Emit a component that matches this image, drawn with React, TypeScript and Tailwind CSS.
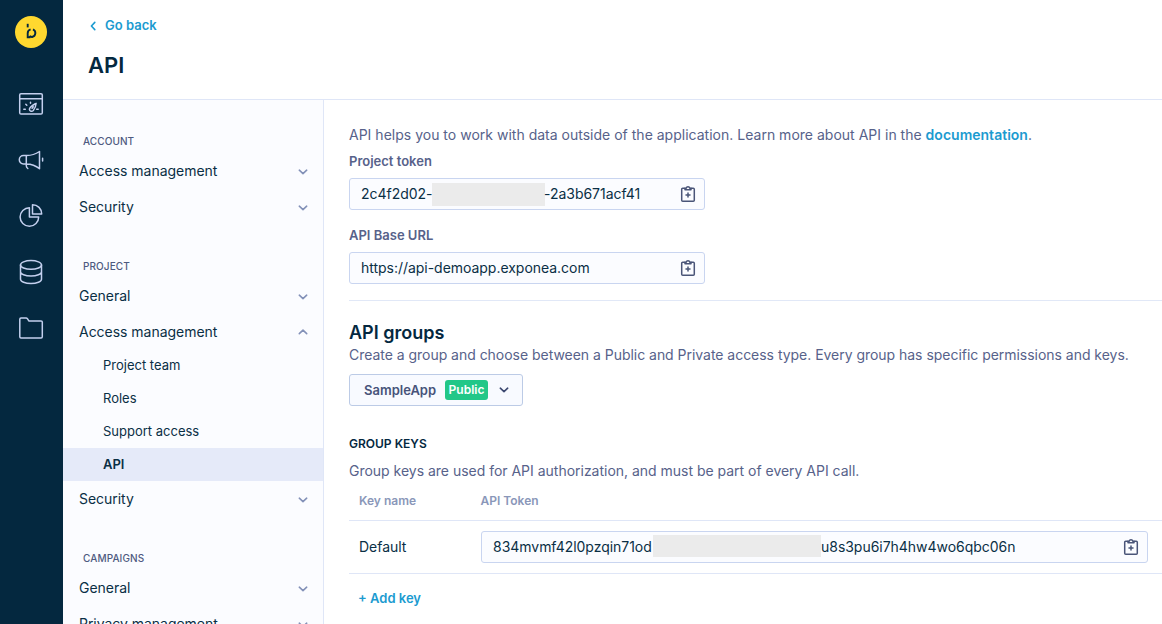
import React from "react";

function Chevron({ up = false, className = "" }: { up?: boolean; className?: string }) {
  return (
    <svg width="10" height="6" viewBox="0 0 10 6" fill="none" stroke="currentColor" strokeWidth="1.6" strokeLinecap="round" strokeLinejoin="round" className={className}>
      <path d={up ? "M1.3 4.6 5 1.2 8.7 4.6" : "M1.3 1.2 5 4.6 8.7 1.2"} />
    </svg>
  );
}

function ClipboardIcon() {
  return (
    <svg width="16" height="18" viewBox="0 0 16 18" fill="none" stroke="#4a5578" strokeWidth="1.5" strokeLinecap="round" strokeLinejoin="round" className="shrink-0">
      <path d="M5 3.2H2.7a1 1 0 0 0-1 1v11.1a1 1 0 0 0 1 1h10.6a1 1 0 0 0 1-1V4.2a1 1 0 0 0-1-1H11" />
      <path d="M5 4.8V3.2H6.1a2 2 0 0 1 3.8 0H11v1.6Z" />
      <path d="M8 8v4M6 10h4" />
    </svg>
  );
}

const iconProps = {
  width: 26,
  height: 26,
  viewBox: "0 0 26 26",
  fill: "none",
  stroke: "#c3cfee",
  strokeWidth: 1.5,
  strokeLinecap: "round" as const,
  strokeLinejoin: "round" as const,
};

function Rail() {
  return (
    <aside className="flex w-[63px] shrink-0 flex-col items-center bg-[#04283f] pt-[15px]">
      <svg width="34" height="34" viewBox="0 0 34 34" fill="none" className="mr-px">
        <circle cx="17" cy="17" r="16" fill="#ffd82f" />
        <g stroke="#04283f" strokeWidth="1.9">
          <path d="M13.7 8.800v3.600" />
          <path d="M16.600 14.300A4.100 4.100 0 0 0 13.700 18.200V22.300H16.400" />
          <path d="M19 14.300A4.100 4.100 0 0 1 18.200 22A4.100 4.100 0 0 1 15.500 21" />
        </g>
      </svg>
      <nav className="mr-px mt-[42px] flex flex-col gap-[30px]">
        <svg {...iconProps}>
          <rect x="1.700" y="2.700" width="22.600" height="20.300" rx="1.300" />
          <path d="M1.700 7.800h22.600M5.800 18.300h1.500M18.700 18.300h1.500M7.800 13.300l1 1M12.500 11.300v1" />
          <path d="M18.100 12.300c-.2 3-1.300 5.500-2.800 7.200-1.300 1.300-3.700.8-3.900-1-.2-2.700 3.600-4.500 6.700-6.200ZM14.100 17.300l1.200-1.500" />
        </svg>
        <svg {...iconProps}>
          <path d="M7.800 8.500H5.500a4 4 0 0 0 0 8.400h2.300M8.300 8.500v8.400M8.300 8.500c5 .1 9.600-1.600 13.200-4v17.200c-3.600-3-8.200-4.700-13.200-4.800M8.300 17v1.700c0 1.200.5 2 1.500 2.800M24.600 11.300v2.800" />
        </svg>
        <svg {...iconProps}>
          <path d="M11.400 4.700A9.300 9.300 0 1 0 20.700 14h-9.300Z" />
          <path d="M14.500 1.700v9.200h9.200a9.200 9.200 0 0 0-9.200-9.200Z" />
        </svg>
        <svg {...iconProps}>
          <ellipse cx="13" cy="5.900" rx="10.500" ry="4.300" />
          <path d="M2.500 5.900v14.300c0 2.400 4.700 4.300 10.500 4.300s10.500-1.900 10.500-4.300V5.900M2.500 12.700c0 2.400 4.700 4.300 10.500 4.300s10.500-1.900 10.500-4.300" />
        </svg>
        <svg {...iconProps}>
          <path d="M1.800 4.200a1.200 1.200 0 0 1 1.200-1.200h5.200c.6 0 .9.300 1.200.7l1.400 2.200h12.300a1.200 1.200 0 0 1 1.200 1.200v14.700a1.200 1.200 0 0 1-1.200 1.200H3a1.200 1.200 0 0 1-1.200-1.200Z" />
        </svg>
      </nav>
    </aside>
  );
}

function SectionTitle({ children }: { children: string }) {
  return <h2 className="mt-[29px] flex h-6 items-center pl-5 text-[10px] font-medium tracking-[0.100px] text-[#4e5a80]">{children}</h2>;
}

function NavRow({ label, open = false }: { label: string; open?: boolean }) {
  return (
    <div className="flex h-9 items-center justify-between pl-4 pr-[15px] text-sm tracking-[-0.030px] text-[#0a2f45]">
      <span>{label}</span>
      <Chevron up={open} className={open ? "mr-[0.5px] text-[#8391b8]" : "mt-[2px] text-[#8391b8]"} />
    </div>
  );
}

function SubRow({ label, active = false }: { label: string; active?: boolean }) {
  return (
    <div className={`flex h-[33px] items-center pl-10 text-[13px] text-[#0a2f45] ${active ? "bg-[#e5eaf9] font-semibold" : ""}`}>
      {label}
    </div>
  );
}

function SettingsNav() {
  return (
    <div className="w-[261px] shrink-0 border-r border-[#dfe6f7] bg-[#fbfcff]">
      <SectionTitle>ACCOUNT</SectionTitle>
      <NavRow label="Access management" />
      <NavRow label="Security" />
      <SectionTitle>PROJECT</SectionTitle>
      <NavRow label="General" />
      <NavRow label="Access management" open />
      <div className="-mt-px">
        <SubRow label="Project team" />
        <SubRow label="Roles" />
        <SubRow label="Support access" />
        <SubRow label="API" active />
      </div>
      <NavRow label="Security" />
      <SectionTitle>CAMPAIGNS</SectionTitle>
      <NavRow label="General" />
      <NavRow label="Privacy management" />
    </div>
  );
}

function TokenField({ children, className = "" }: { children: React.ReactNode; className?: string }) {
  return (
    <div className={`flex h-8 items-center justify-between rounded-[3px] border border-[#c9d5f0] bg-[#fbfcff] pl-[11px] pr-2 text-sm tracking-[-0.030px] text-[#0a2f45] ${className}`}>
      <div className="flex items-center whitespace-nowrap">{children}</div>
      <ClipboardIcon />
    </div>
  );
}

function Content() {
  return (
    <main className="min-w-0 flex-1 bg-white pl-[25px] text-sm text-[#57628a]">
      <p className="mt-[25px] h-5 whitespace-nowrap leading-5 tracking-[0.010px]">
        API helps you to work with data outside of the application. Learn more about API in the{" "}
        <a className="font-semibold text-[#1c9bd0]">documentation</a>.
      </p>
      <label className="mt-[6px] block h-5 text-[13px] font-semibold leading-5">Project token</label>
      <TokenField className="mt-[7px] w-[356px]">
        <span className="w-[71px]">2c4f2d02-</span>
        <span className="h-[23px] w-[113px] bg-[#ebebeb]" />
        <span className="-ml-px">-2a3b671acf41</span>
      </TokenField>
      <label className="mt-[15px] block h-5 text-[13px] font-semibold leading-5">API Base URL</label>
      <TokenField className="mt-[7px] w-[356px]">
        <span>https://api-demoapp.exponea.com</span>
      </TokenField>
      <hr className="mt-4 border-[#e1e8f7]" />
      <h2 className="mt-5 h-6 text-lg font-semibold leading-6 text-[#04283f]">API groups</h2>
      <p className="h-5 whitespace-nowrap leading-5 tracking-[-0.030px]">
        Create a group and choose between a Public and Private access type. Every group has specific permissions and keys.
      </p>
      <button className="mt-[9px] flex h-8 w-[174px] items-center rounded-[3px] border border-[#bccbe6] bg-[#f8faff] pl-[14px] text-[13px] font-semibold text-[#47537a]">
        <span className="w-[81px] text-left">SampleApp</span>
        <span className="flex h-5 w-[43px] items-center justify-center rounded-[3px] bg-[#22c788] text-xs font-semibold text-white">Public</span>
        <Chevron className="ml-[11px] text-[#3c4870]" />
      </button>
      <h3 className="mt-[28px] h-5 text-xs font-semibold leading-5 text-[#04283f]">GROUP KEYS</h3>
      <p className="mt-[7px] h-5 leading-5 tracking-[-0.015px]">Group keys are used for API authorization, and must be part of every API call.</p>
      <div className="mt-[10px] flex h-[30px] border-b border-[#dfe6f7] text-xs font-semibold leading-5 text-[#8a97b9]">
        <span className="w-[131.500px] pl-[10px]">Key name</span>
        <span>API Token</span>
      </div>
      <div className="flex h-[53px] items-center border-b border-[#dfe6f7] pr-[14px] text-[#0a2f45]">
        <span className="w-[132px] pl-[10px] tracking-[-0.030px]">Default</span>
        <TokenField className="flex-1">
          <span className="w-[160px]">834mvmf42l0pzqin71od</span>
          <span className="mb-[3px] h-[22px] w-[168px] bg-[#ebebeb]" />
          <span>u8s3pu6i7h4hw4wo6qbc06n</span>
        </TokenField>
      </div>
      <a className="mt-[14px] block pl-[9px] text-[13px] font-semibold leading-5 text-[#1c9bd0]">+ Add key</a>
    </main>
  );
}

export default function App() {
  return (
    <div className="flex h-[624px] w-[1162px] overflow-hidden bg-white font-['Inter',sans-serif]">
      <Rail />
      <div className="flex min-w-0 flex-1 flex-col">
        <header className="h-[100px] shrink-0 border-b border-[#dfe6f7] pl-[25px]">
          <a className="flex h-[50px] items-center pt-px text-[13px] font-semibold text-[#1c9bd0]">
            <svg width="6" height="10" viewBox="0 0 6 10" fill="none" stroke="currentColor" strokeWidth="1.600" strokeLinecap="round" strokeLinejoin="round" className="ml-[2px] mr-[9px]">
              <path d="M4.800 1.400 1.400 5 4.800 8.600" />
            </svg>
            Go back
          </a>
          <h1 className="h-[30px] text-[22px] font-semibold leading-[30px] text-[#04283f]">API</h1>
        </header>
        <div className="flex min-h-0 flex-1">
          <SettingsNav />
          <Content />
        </div>
      </div>
    </div>
  );
}
